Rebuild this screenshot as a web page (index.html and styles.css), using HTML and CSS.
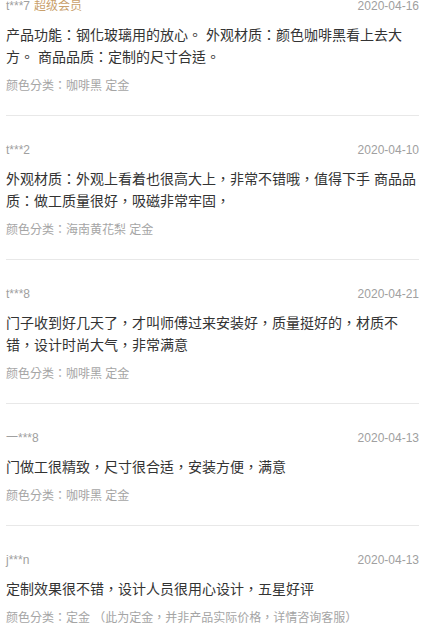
FILE: index.html
```html
<!DOCTYPE html>
<html lang="zh-TW">
<head>
<meta charset="utf-8">
<title>评价</title>
<link rel="stylesheet" href="styles.css">
</head>
<body>
<div class="reviews">
  <div class="review">
    <div class="meta"><span class="user">t***7<span class="vip">超级会员</span></span><span class="date">2020-04-16</span></div>
    <p class="content">产品功能：钢化玻璃用的放心。 外观材质：颜色咖啡黑看上去大方。 商品品质：定制的尺寸合适。</p>
    <div class="sku">颜色分类：咖啡黑 定金</div>
  </div>
  <div class="review">
    <div class="meta"><span class="user">t***2</span><span class="date">2020-04-10</span></div>
    <p class="content">外观材质：外观上看着也很高大上，非常不错哦，值得下手 商品品质：做工质量很好，吸磁非常牢固，</p>
    <div class="sku">颜色分类：海南黄花梨 定金</div>
  </div>
  <div class="review">
    <div class="meta"><span class="user">t***8</span><span class="date">2020-04-21</span></div>
    <p class="content">门子收到好几天了，才叫师傅过来安装好，质量挺好的，材质不错，设计时尚大气，非常满意</p>
    <div class="sku">颜色分类：咖啡黑 定金</div>
  </div>
  <div class="review">
    <div class="meta"><span class="user">一***8</span><span class="date">2020-04-13</span></div>
    <p class="content">门做工很精致，尺寸很合适，安装方便，满意</p>
    <div class="sku">颜色分类：咖啡黑 定金</div>
  </div>
  <div class="review">
    <div class="meta"><span class="user">j***n</span><span class="date">2020-04-13</span></div>
    <p class="content">定制效果很不错，设计人员很用心设计，五星好评</p>
    <div class="sku">颜色分类：定金 （此为定金，并非产品实际价格，详情咨询客服）</div>
  </div>
</div>
</body>
</html>
```
FILE: styles.css
```css
html, body {
  margin: 0;
  padding: 0;
  background: #fff;
}
body {
  font-family: "Liberation Sans", "Noto Sans CJK TC", sans-serif;
  overflow: hidden;
}
.reviews {
  margin: -28px 2px 0 6px;
}
.review {
  padding: 26px 0 21px;
  border-bottom: 1px solid #e8e8e8;
}
.meta {
  display: flex;
  justify-content: space-between;
  font-size: 12px;
  line-height: 16px;
  color: #a0a0a0;
}
.vip {
  color: #c9a06b;
  margin-left: 4px;
}
.content {
  margin: 10px 0 0;
  font-size: 14px;
  line-height: 22px;
  color: #333;
  line-break: strict;
}
.sku {
  margin-top: 10px;
  font-size: 12px;
  line-height: 16px;
  color: #a5a5a5;
}
```
